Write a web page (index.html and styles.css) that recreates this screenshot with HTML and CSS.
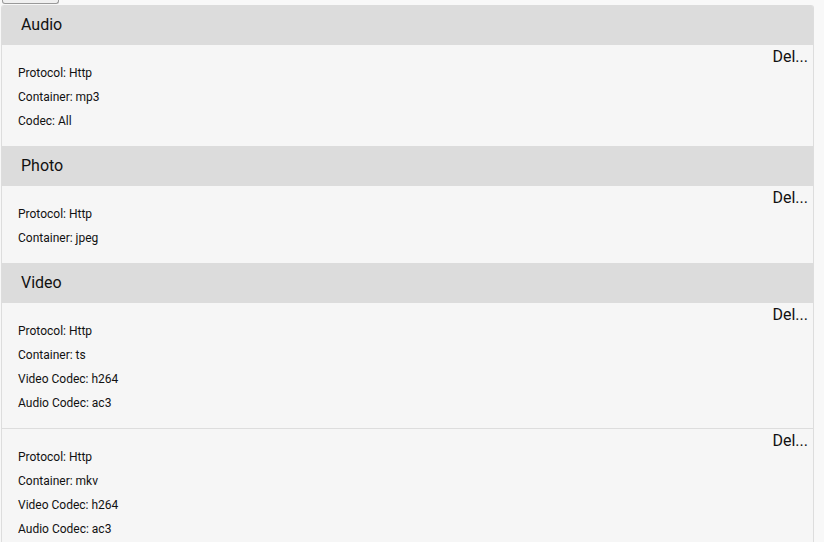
FILE: index.html
```html
<!DOCTYPE html>
<html>
<head>
<meta charset="utf-8">
<link rel="stylesheet" href="styles.css">
</head>
<body>
<div class="page">
  <div class="top-btn"></div>
  <div class="card">
    <div class="section-head">Audio</div>
    <div class="item">
      <div class="lines">
        <div class="line">Protocol: Http</div>
        <div class="line">Container: mp3</div>
        <div class="line">Codec: All</div>
      </div>
      <div class="del">Del...</div>
    </div>
    <div class="section-head">Photo</div>
    <div class="item">
      <div class="lines">
        <div class="line">Protocol: Http</div>
        <div class="line">Container: jpeg</div>
      </div>
      <div class="del">Del...</div>
    </div>
    <div class="section-head">Video</div>
    <div class="item">
      <div class="lines">
        <div class="line">Protocol: Http</div>
        <div class="line">Container: ts</div>
        <div class="line">Video Codec: h264</div>
        <div class="line">Audio Codec: ac3</div>
      </div>
      <div class="del">Del...</div>
    </div>
    <div class="item sep">
      <div class="lines">
        <div class="line">Protocol: Http</div>
        <div class="line">Container: mkv</div>
        <div class="line">Video Codec: h264</div>
        <div class="line">Audio Codec: ac3</div>
      </div>
      <div class="del">Del...</div>
    </div>
  </div>
</div>
</body>
</html>
```
FILE: styles.css
```css
html, body {
  margin: 0;
  padding: 0;
  background: #f8f8f8;
  font-family: Roboto, "Liberation Sans", sans-serif;
  color: #111;
  overflow: hidden;
}
.page {
  padding-left: 1px;
  width: 813px;
}
.top-btn {
  margin-left: 1px;
  width: 55px;
  height: 4px;
  border: 1px solid #999;
  border-top: none;
  border-radius: 0 0 3px 3px;
  background: #f0f0f0;
  margin-top: -1px;
}
.card {
  margin-top: 1px;
  border: 1px solid #ddd;
  border-top: none;
  border-radius: 3px 3px 0 0;
  background: #f6f6f6;
  overflow: hidden;
}
.section-head {
  background: #dcdcdc;
  height: 40px;
  line-height: 40px;
  padding-left: 19px;
  font-size: 16px;
}
.item {
  display: flex;
  justify-content: space-between;
  align-items: flex-start;
  padding: 0 5px 0 16px;
}
.item.sep {
  border-top: 1px solid #ddd;
}
.lines {
  padding: 16px 0 13px;
}
.line {
  font-size: 12px;
  line-height: 24px;
  height: 24px;
}
.del {
  margin-top: 3px;
  font-size: 16px;
  line-height: 18px;
  white-space: nowrap;
}
```
